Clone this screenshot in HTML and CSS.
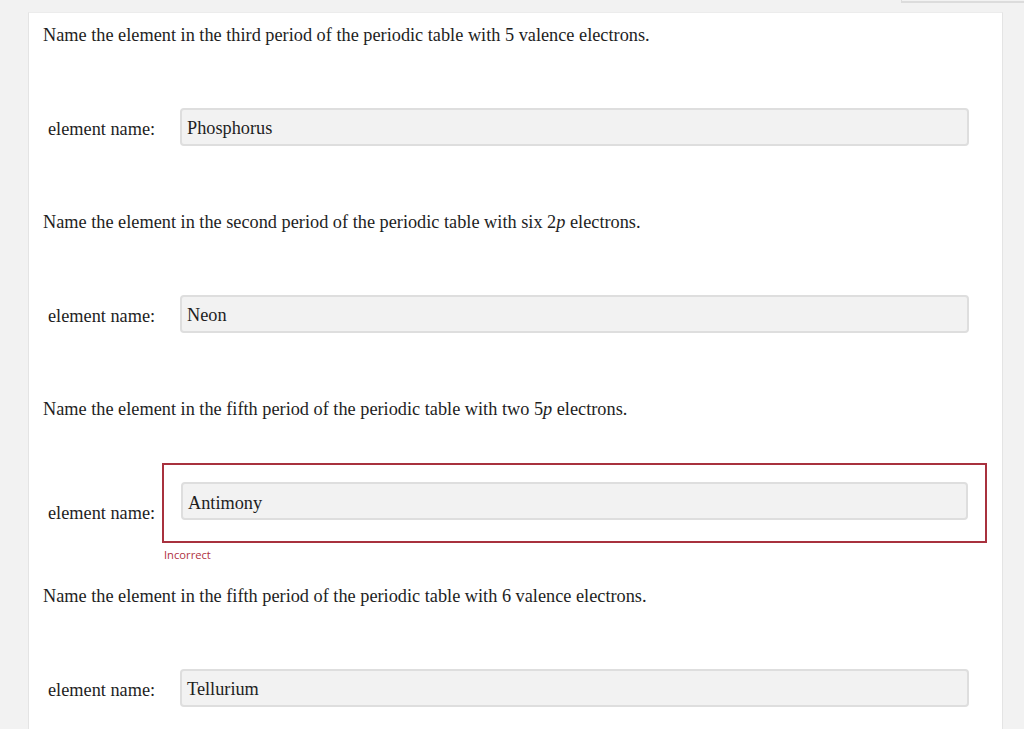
FILE: index.html
```html
<!DOCTYPE html>
<html>
<head>
<meta charset="utf-8">
<link rel="stylesheet" href="styles.css">
</head>
<body>
<div class="topstrip"><div class="topbox"></div></div>
<div class="panel">
  <div class="question">
    <p class="qtext">Name the element in the third period of the periodic table with 5 valence electrons.</p>
    <div class="row">
      <span class="label">element name:</span>
      <div class="field"><div class="input">Phosphorus</div></div>
    </div>
  </div>
  <div class="question">
    <p class="qtext">Name the element in the second period of the periodic table with six 2<i>p</i> electrons.</p>
    <div class="row">
      <span class="label">element name:</span>
      <div class="field"><div class="input">Neon</div></div>
    </div>
  </div>
  <div class="question wrong">
    <p class="qtext">Name the element in the fifth period of the periodic table with two 5<i>p</i> electrons.</p>
    <div class="row">
      <span class="label">element name:</span>
      <div class="field">
        <div class="errbox"><div class="input">Antimony</div></div>
        <div class="errmsg">Incorrect</div>
      </div>
    </div>
  </div>
  <div class="question">
    <p class="qtext">Name the element in the fifth period of the periodic table with 6 valence electrons.</p>
    <div class="row">
      <span class="label">element name:</span>
      <div class="field"><div class="input">Tellurium</div></div>
    </div>
  </div>
</div>
</body>
</html>
```
FILE: styles.css
```css
html, body {
  margin: 0;
  padding: 0;
  background: #f2f2f2;
  height: 100%;
  overflow: hidden;
}
body {
  font-family: "Liberation Serif", "Times New Roman", Times, serif;
  color: #1e1e1e;
  font-size: 18.3px;
}
.topstrip {
  height: 3px;
  display: flex;
  justify-content: flex-end;
}
.topbox {
  width: 122px;
  height: 1px;
  border-bottom: 2px solid #dcdcdc;
  border-left: 1px solid #dcdcdc;
}
.panel {
  margin: 9px 0 0 28px;
  width: 975px;
  background: #fff;
  border-left: 1px solid #e4e4e4;
  border-top: 1px solid #ececec;
  border-right: 1px solid #e4e4e4;
  box-sizing: border-box;
  padding: 12px 0 0 14px;
  height: 800px;
}
.qtext {
  margin: 0;
  line-height: 20px;
  height: 20px;
}
.row {
  display: flex;
  align-items: center;
  margin-top: 63px;
  margin-bottom: 66px;
}
.label {
  width: 132px;
  padding-left: 5px;
  flex: none;
  line-height: 20px;
  padding-top: 3px;
}
.field {
  width: 789px;
  flex: none;
}
.input {
  height: 38px;
  box-sizing: border-box;
  background: #f2f2f2;
  border: 2px solid #dedede;
  border-radius: 4px;
  padding: 1px 5px 0 5px;
  line-height: 34px;
}
.wrong .row {
  margin-top: 44px;
  margin-bottom: 24px;
  align-items: flex-start;
}
.wrong .label {
  padding-top: 40px;
}
.errbox {
  margin: 0 -18px;
  border: 2px solid #a8313e;
  padding: 17px 17px 21px 17px;
}
.errbox .input {
  padding-left: 5px;
  padding-top: 2px;
}
.errmsg {
  font-family: "Open Sans", "Liberation Sans", sans-serif;
  font-size: 11.2px;
  color: #b0323f;
  line-height: 14px;
  margin: 5px 0 0 -16px;
}
```
